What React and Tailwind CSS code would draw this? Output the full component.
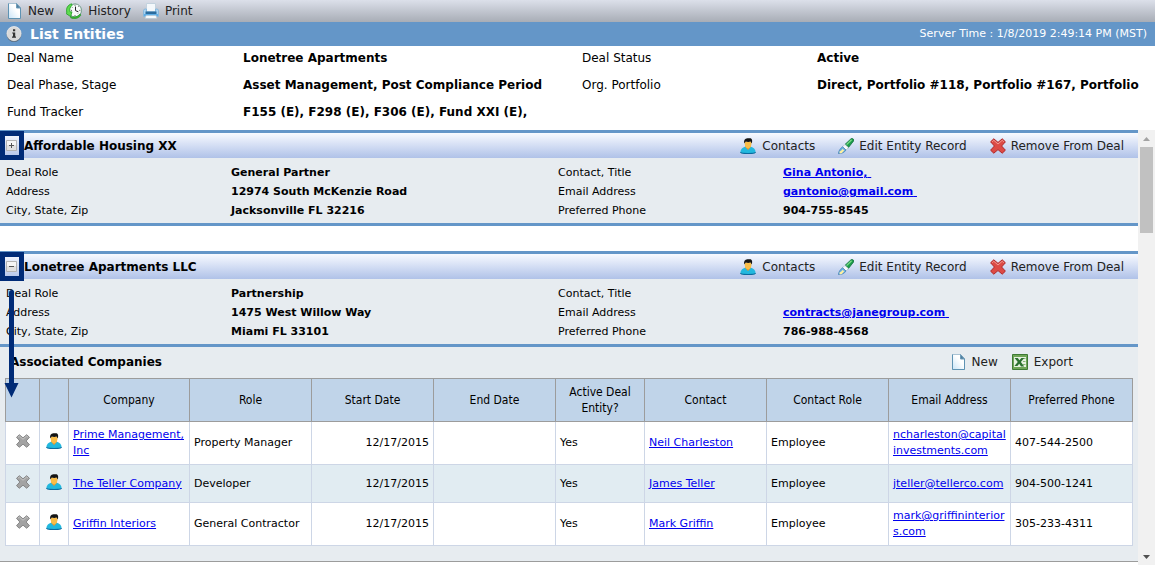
import React, { useState } from 'react'

const PageIcon = () => (
  <svg width="16" height="16" viewBox="0 0 16 16" aria-hidden="true">
    <defs>
      <linearGradient id="page" x1="0" y1="1" x2="1" y2="0">
        <stop offset="0" stopColor="#c9e4f7" />
        <stop offset="0.6" stopColor="#ffffff" />
      </linearGradient>
    </defs>
    <path d="M2.5 0.5H10.5L14.5 4.5V15.5H2.5Z" fill="url(#page)" stroke="#a9c3d4" />
    <path d="M2.5 0.5V15.5H14.5V5" fill="none" stroke="#5f93b3" />
    <path d="M10.5 0.5V5H14.5Z" fill="#4d7d9d" stroke="#6f9cb9" />
  </svg>
)

const HistoryIcon = () => (
  <svg width="16" height="16" viewBox="0 0 16 16" aria-hidden="true">
    <circle cx="9" cy="7.4" r="6.5" fill="#f6f9fa" stroke="#6f9a86" strokeWidth="1" />
    <path d="M9.5 3.6V7.6L12.4 8.8" fill="none" stroke="#222" strokeWidth="1" />
    <path d="M13.2 7.4H14.4M9 1.8V2.8M12.6 3.4L12 4M5 7.4H6M9 12V13M6.2 4.4L6.8 5M12.4 11L12 10.6" stroke="#555" strokeWidth="0.9" />
    <path d="M5.6 0.8C1.6 2 -0.2 5.6 0.8 9.2L0.2 10.6L4.6 13.6L6 8.8L4.4 9.2C3.2 6.8 3.8 4 6 2.4Z" fill="#5fdc50" stroke="#1d9a22" strokeWidth="0.8" />
    <path d="M4.6 13.4C7.8 14.8 11.8 13.8 14 11L15 12C13 15.6 8 16.6 4.6 14.8Z" fill="#38b832" stroke="#198b1d" strokeWidth="0.5" />
  </svg>
)

const PrintIcon = () => (
  <svg width="16" height="16" viewBox="0 0 16 16" aria-hidden="true">
    <path d="M3.5 0.5H12.5V9H3.5Z" fill="#f4f8fb" stroke="#c3d2de" />
    <path d="M0.5 7.5L1.5 6H3.5V9H12.5V6H14.5L15.5 7.5V13.5H0.5Z" fill="#a9d3f2" stroke="#7eb2da" strokeWidth="0.8" />
    <path d="M2.5 8.5H13.5V11H2.5Z" fill="#2a6c9f" />
    <path d="M1 11H15V13H1Z" fill="#5faee6" />
    <path d="M3 12.5H13L14 15.5H2Z" fill="#f6f9fb" stroke="#b4c5d2" strokeWidth="0.7" />
  </svg>
)

const InfoIcon = () => (
  <svg width="16" height="16" viewBox="0 0 16 16" aria-hidden="true">
    <circle cx="8" cy="8.4" r="7.4" fill="#55606b" />
    <circle cx="8" cy="7.6" r="7.1" fill="#d9d9d9" stroke="#f5f5f5" strokeWidth="0.7" />
    <path d="M7 3.2H9.2V5.2H7ZM6.2 6.4H9.2V10.6H10V11.8H6V10.6H7V7.5H6.2Z" fill="#333" />
  </svg>
)

const PersonIcon = () => (
  <svg width="16" height="16" viewBox="0 0 16 16" aria-hidden="true">
    <path d="M0.4 14C0.6 11.2 2.6 9.6 5 8.8H11C13.4 9.6 15.4 11.2 15.6 14C15.4 16.2 0.6 16.2 0.4 14Z" fill="#22b8de" />
    <path d="M0.5 14.2C1 16 15 16 15.5 14.2" fill="none" stroke="#0b6a9e" strokeWidth="1.2" />
    <path d="M5 8.8L8 12L11 8.8L10 7.6H6Z" fill="#e8962a" />
    <path d="M4.8 3.6H11.4V6.6C11.2 9 9.8 10.4 8.1 10.4C6.4 10.4 5 9 4.8 6.6Z" fill="#f9bd48" />
    <path d="M4.2 5.4C3.6 2.2 4.8 0.4 7.4 0.2H10.6C12.4 0.8 12.4 3.2 11.8 5.4L10.6 3.6C9 4 6.8 4 5.8 3.4Z" fill="#141414" />
  </svg>
)

const BrushIcon = () => (
  <svg width="16" height="16" viewBox="0 0 16 16" aria-hidden="true">
    <path d="M13 0.8C14.6 -0.2 16.4 1.4 15.4 3.2L10.4 9.6L7 6.4Z" fill="#1f9d4c" stroke="#0f6f3c" strokeWidth="0.8" />
    <path d="M13.6 1.8L8.6 6.6" stroke="#7fe08a" strokeWidth="1.2" />
    <path d="M7 6.4L10.4 9.6L8 12L4.6 8.8Z" fill="#f8fafb" stroke="#9fb4c2" strokeWidth="0.6" />
    <path d="M4.6 8.8L8 12C6.2 15 3.4 15.4 0.4 15.6C0.6 13.4 2 10.4 4.6 8.8Z" fill="#6fb2e2" stroke="#3c7db2" strokeWidth="0.7" />
    <path d="M1.6 14.6C3.2 14.4 4.4 13.2 5.4 11.6" fill="none" stroke="#fff0a0" strokeWidth="2" />
  </svg>
)

const CrossIcon = ({ size = 16, fill = '#dd4a45', edge = '#b02626', shine = '#f39a92' }) => (
  <svg width={size} height={size} viewBox="0 0 16 16" aria-hidden="true">
    <path d="M3.8 0.8L8 4.4L12.2 0.8L15.4 3.8L11.6 8L15.4 12.2L12.2 15.2L8 11.6L3.8 15.2L0.6 12.2L4.4 8L0.6 3.8Z" fill={fill} stroke={edge} strokeWidth="1" strokeLinejoin="round" />
    <path d="M2.2 3.8L3.8 2.3L8 6L12.2 2.3L13.8 3.8" fill="none" stroke={shine} strokeWidth="1" />
  </svg>
)

const ExcelIcon = () => (
  <svg width="16" height="16" viewBox="0 0 16 16" aria-hidden="true">
    <path d="M0.5 0.5H15.5V15.5H0.5Z" fill="#6fa657" stroke="#3e7a34" />
    <path d="M2 3H14V13H2Z" fill="#e6f1e0" />
    <path d="M11 4.5H13.5M11 7.5H13.5M11 10.5H13.5" stroke="#86b677" />
    <path d="M2.6 4H5.8L7.4 6.2L9.4 4H12.2L8.9 8L12.2 12.4H9L7.2 9.8L5.4 12H2.4L5.8 8Z" fill="#2c7030" />
  </svg>
)

const dealInfo = [
  ['Deal Name', 'Lonetree Apartments', 'Deal Status', 'Active'],
  ['Deal Phase, Stage', 'Asset Management, Post Compliance Period', 'Org. Portfolio', 'Direct, Portfolio #118, Portfolio #167, Portfolio'],
  ['Fund Tracker', 'F155 (E), F298 (E), F306 (E), Fund XXI (E),', '', ''],
]

const entities = [
  {
    name: 'Affordable Housing XX',
    role: 'General Partner',
    address: '12974 South McKenzie Road',
    city: 'Jacksonville FL 32216',
    contact: 'Gina Antonio,',
    email: 'gantonio@gmail.com',
    phone: '904-755-8545',
    open: false,
  },
  {
    name: 'Lonetree Apartments LLC',
    role: 'Partnership',
    address: '1475 West Willow Way',
    city: 'Miami FL 33101',
    contact: '',
    email: 'contracts@janegroup.com',
    phone: '786-988-4568',
    open: true,
  },
]

const columns = ['', '', 'Company', 'Role', 'Start Date', 'End Date', 'Active Deal Entity?', 'Contact', 'Contact Role', 'Email Address', 'Preferred Phone']

const companies = [
  { company: 'Prime Management, Inc', role: 'Property Manager', start: '12/17/2015', end: '', active: 'Yes', contact: 'Neil Charleston', contactRole: 'Employee', email: 'ncharleston@capitalinvestments.com', phone: '407-544-2500' },
  { company: 'The Teller Company', role: 'Developer', start: '12/17/2015', end: '', active: 'Yes', contact: 'James Teller', contactRole: 'Employee', email: 'jteller@tellerco.com', phone: '904-500-1241' },
  { company: 'Griffin Interiors', role: 'General Contractor', start: '12/17/2015', end: '', active: 'Yes', contact: 'Mark Griffin', contactRole: 'Employee', email: 'mark@griffininteriors.com', phone: '305-233-4311' },
]

const ToolButton = ({ icon, label, gap = 'gap-[6px]' }) => (
  <button type="button" className={`flex items-center whitespace-nowrap text-[#222] cursor-pointer ${gap}`}>
    {icon}
    {label}
  </button>
)

const Link = ({ children, trail }) => (
  <a href="#" className="text-[#0000ee] underline">{children}{trail && '\u00a0'}</a>
)

const CompanyTable = () => (
  <table className="w-full table-fixed border-collapse text-[11px] leading-4">
    <colgroup>
      <col className="w-[34px]" />
      <col className="w-[29px]" />
      <col className="w-[121px]" />
      <col />
      <col />
      <col />
      <col className="w-[89px]" />
      <col />
      <col />
      <col />
      <col />
    </colgroup>
    <thead>
      <tr className="h-[43px] bg-[#c0d4e9] font-['DejaVu_Sans_Condensed','DejaVu_Sans',sans-serif] text-[12px]">
        {columns.map((name, i) => (
          <th key={i} className="border border-[#9c9c9c] px-1 font-normal">{name}</th>
        ))}
      </tr>
    </thead>
    <tbody>
      {companies.map((row) => (
        <tr key={row.company} className="h-[38px] bg-white even:bg-[#e1ecf2] [&>td]:border [&>td]:border-[#cdd6e6] [&>td]:px-1 [&>td]:py-[5px]">
          <td>
            <button type="button" aria-label={`Remove ${row.company}`} className="flex w-full justify-center pb-1 cursor-pointer">
              <CrossIcon size={14} fill="#a3a3a3" edge="#7d7d7d" shine="#c9c9c9" />
            </button>
          </td>
          <td>
            <button type="button" aria-label={`Contacts of ${row.company}`} className="flex w-full justify-center pb-1 cursor-pointer">
              <PersonIcon />
            </button>
          </td>
          <td><Link>{row.company}</Link></td>
          <td>{row.role}</td>
          <td className="text-right">{row.start}</td>
          <td>{row.end}</td>
          <td>{row.active}</td>
          <td><Link>{row.contact}</Link></td>
          <td>{row.contactRole}</td>
          <td className="break-all"><Link>{row.email}</Link></td>
          <td>{row.phone}</td>
        </tr>
      ))}
    </tbody>
  </table>
)

const Entity = ({ entity }) => {
  const [open, setOpen] = useState(entity.open)

  return (
    <section>
      <div className="border-y-[3px] border-[#6496c8] bg-[#e7ecf0]">
        <div className="relative flex h-[25px] items-center bg-linear-to-b from-[#f8faff] to-[#b0c2e8] pr-[14px] pl-[6px]">
          {/* callout around the toggle */}
          <div className="pointer-events-none absolute -top-[2px] left-0 z-10 h-[29px] w-6 border-5 border-[#002b77]"></div>
          {entity.open && (
            <svg className="pointer-events-none absolute top-9 left-[4px] z-10" width="15" height="108" viewBox="0 0 15 108" aria-hidden="true">
              <path d="M5 3Q5 0 7.5 0Q10 0 10 3V93H14.5L7.5 107.5L0.5 93H5Z" fill="#002b77" />
            </svg>
          )}
          <button
            type="button"
            aria-label={open ? 'Collapse' : 'Expand'}
            onClick={() => setOpen(!open)}
            className="mr-[7px] cursor-pointer"
          >
            <svg width="11" height="11" viewBox="0 0 11 11" aria-hidden="true">
              <path d="M0.5 0.5H10.5V10.5H0.5Z" fill="#e0e0e0" stroke="#b3b3b3" />
              <path d="M1 1H10V5H1Z" fill="#f5f5f5" />
              <path d={open ? 'M3 5.5H8' : 'M3 5.5H8M5.5 3V8'} stroke="#555" />
            </svg>
          </button>
          <h2 className="font-bold">{entity.name}</h2>
          <div className="ml-auto flex gap-[23px]">
            <ToolButton icon={<PersonIcon />} label="Contacts" />
            <ToolButton icon={<BrushIcon />} label="Edit Entity Record" gap="gap-[5px]" />
            <ToolButton icon={<CrossIcon />} label="Remove From Deal" gap="gap-[5px]" />
          </div>
        </div>
        <div className="grid grid-cols-[225fr_327fr_225fr_355fr] pt-[5px] pb-[3px] pl-[6px] text-[11px] leading-[19px] [&>*:nth-child(even)]:font-bold">
          <span>Deal Role</span>
          <span>{entity.role}</span>
          <span>Contact, Title</span>
          <span>{entity.contact && <Link trail>{entity.contact}</Link>}</span>
          <span>Address</span>
          <span>{entity.address}</span>
          <span>Email Address</span>
          <span><Link trail>{entity.email}</Link></span>
          <span>City, State, Zip</span>
          <span>{entity.city}</span>
          <span>Preferred Phone</span>
          <span>{entity.phone}</span>
        </div>
      </div>
      {open && (
        <div className="border-b border-[#9c9c9c] bg-[#e7ecf0] px-[5px] pb-[15px]">
          <div className="flex h-[31px] items-center pr-[60px] pb-[2px] pl-[5px]">
            <h3 className="font-bold">Associated Companies</h3>
            <div className="ml-auto flex gap-[14px]">
              <ToolButton icon={<PageIcon />} label="New" />
              <ToolButton icon={<ExcelIcon />} label="Export" />
            </div>
          </div>
          <CompanyTable />
        </div>
      )}
    </section>
  )
}

const ScrollBar = () => (
  <div className="flex w-[17px] shrink-0 flex-col items-center bg-[#f1f1f1]">
    <button type="button" aria-label="Scroll up" className="flex h-[17px] w-full items-center justify-center">
      <svg width="7" height="4" viewBox="0 0 7 4"><path d="M0 4L3.5 0L7 4Z" fill="#a3a3a3" /></svg>
    </button>
    <div className="h-[86px] w-[13px] bg-[#c1c1c1]"></div>
    <button type="button" aria-label="Scroll down" className="mt-auto flex h-[17px] w-full items-center justify-center">
      <svg width="7" height="4" viewBox="0 0 7 4"><path d="M0 0L3.5 4L7 0Z" fill="#505050" /></svg>
    </button>
  </div>
)

const App = () => {
  return (
    <div className="flex min-h-screen flex-col bg-white font-['Verdana','DejaVu_Sans',sans-serif] text-[12px] leading-4 text-black">
      <div className="flex h-[22px] items-center gap-3 bg-linear-to-b from-[#dce0ea] to-[#a8adb6] px-[6px]">
        <ToolButton icon={<PageIcon />} label="New" />
        <ToolButton icon={<HistoryIcon />} label="History" />
        <ToolButton icon={<PrintIcon />} label="Print" />
      </div>
      <header className="flex h-6 items-center bg-[#6496c8] px-[6px] text-white">
        <InfoIcon />
        <h1 className="ml-2 text-[14px] font-bold">List Entities</h1>
        <p className="ml-auto pr-[2px] text-[11px]">Server Time : 1/8/2019 2:49:14 PM (MST)</p>
      </header>
      <div className="grid grid-cols-[236fr_339fr_235fr_338fr] gap-y-[11px] pt-1 pb-[10px] pl-[7px] [&>*:nth-child(even)]:font-bold">
        {dealInfo.flat().map((text, i) => (
          <span key={i} className="whitespace-nowrap">{text}</span>
        ))}
      </div>
      <div className="flex flex-1">
        <main className="flex min-w-0 flex-1 flex-col gap-[25px]">
          {entities.map((entity) => (
            <Entity key={entity.name} entity={entity} />
          ))}
        </main>
        <ScrollBar />
      </div>
    </div>
  )
}

export default App
